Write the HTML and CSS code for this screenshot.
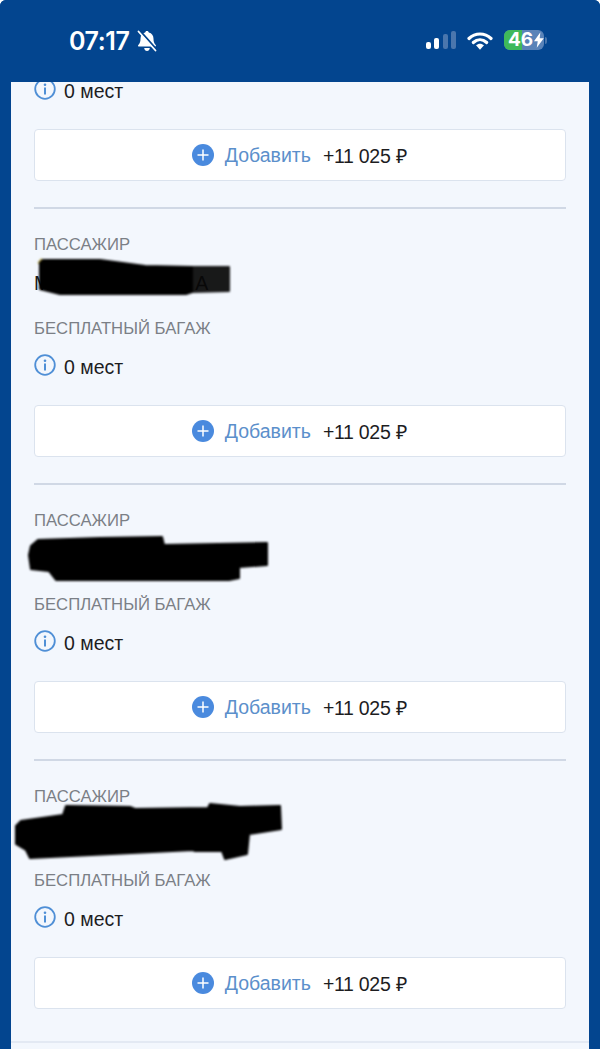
FILE: index.html
```html
<!DOCTYPE html>
<html lang="en">
<head>
    <meta charset="UTF-8">
    <meta name="viewport" content="width=device-width, initial-scale=1.0">
    <title>Багаж</title>
    <link rel="stylesheet" href="styles.css">
</head>
<body>
<div class="screen">
    <!-- Status bar -->
    <header class="statusBar">
        <div class="statusLeft">
            <span class="time">07:17</span>
            <svg class="bellIcon" viewBox="0 0 20 22" width="20" height="22">
                <path d="M10 1c1 0 1.700.7 1.800 1.600 3 .7 4.700 3.200 4.700 6.200 0 3 .6 4.500 2.200 6.100.6.7.2 1.600-.7 1.600H2c-.9 0-1.300-.9-.7-1.600C2.900 13.300 3.500 11.800 3.500 8.800c0-3 1.700-5.500 4.700-6.200C8.300 1.700 9 1 10 1z" fill="#fff"/>
                <path d="M7.200 18h5.600c-.2 1.700-1.300 3-2.800 3s-2.600-1.300-2.800-3z" fill="#fff"/>
                <path d="M3.500 1.500 19.500 19.500" stroke="#03458f" stroke-width="2.200"/>
                <path d="M1.500 1.500 18.500 20.500" stroke="#fff" stroke-width="1.800" stroke-linecap="round"/>
            </svg>
        </div>
        <div class="statusRight">
            <div class="signal">
                <span class="bar barOne"></span>
                <span class="bar barTwo"></span>
                <span class="bar barThree dim"></span>
                <span class="bar barFour dim"></span>
            </div>
            <svg class="wifiIcon" viewBox="0 0 26 19" width="26" height="19">
                <path d="M2 7.500C8.300 1.500 17.700 1.500 24 7.500" fill="none" stroke="#fff" stroke-width="3.200" stroke-linecap="round"/>
                <path d="M6.300 11.500c4-3.700 9.400-3.700 13.400 0" fill="none" stroke="#fff" stroke-width="3.200" stroke-linecap="round"/>
                <path d="M9 14.300c2.500-2.100 5.500-2.100 8 0l-4 4.500z" fill="#fff"/>
            </svg>
            <div class="battery">
                <div class="batteryBody">
                    <span class="batteryFill"></span>
                    <span class="batteryText">46</span>
                    <svg class="boltIcon" viewBox="0 0 10 16" width="10" height="16">
                        <path d="M6.500 0 0 9.200h3.800L2.800 16 10 6.300H5.800z" fill="#fff"/>
                    </svg>
                </div>
                <span class="batteryNub"></span>
            </div>
        </div>
    </header>

    <main class="panel">
        <!-- Rest of the passenger above, scrolled under the header -->
        <div class="seatsRow">
            <svg class="infoIcon" viewBox="0 0 22 22" width="22" height="22">
                <circle cx="11" cy="11" r="9.800" fill="none" stroke="#4f8fd6" stroke-width="1.800"/>
                <circle cx="11" cy="6.700" r="1.300" fill="#4f8fd6"/>
                <rect x="10" y="9.500" width="2" height="7" fill="#4f8fd6"/>
            </svg>
            <span class="seatsText">0 мест</span>
        </div>
        <button class="addBtn">
            <svg class="plusIcon" viewBox="0 0 22 22" width="22" height="22">
                <circle cx="11" cy="11" r="11" fill="#4a8ade"/>
                <path d="M11 5.500v11M5.500 11h11" stroke="#fff" stroke-width="1.500"/>
            </svg>
            <span class="addLabel">Добавить</span>
            <span class="addPrice">+11 025 ₽</span>
        </button>

        <section class="passenger">
            <div class="fieldLabel">ПАССАЖИР</div>
            <div class="passengerName">М<span class="nameEnd">А</span></div>
            <div class="fieldLabel">БЕСПЛАТНЫЙ БАГАЖ</div>
            <div class="seatsRow">
                <svg class="infoIcon" viewBox="0 0 22 22" width="22" height="22">
                    <circle cx="11" cy="11" r="9.800" fill="none" stroke="#4f8fd6" stroke-width="1.800"/>
                    <circle cx="11" cy="6.700" r="1.300" fill="#4f8fd6"/>
                    <rect x="10" y="9.500" width="2" height="7" fill="#4f8fd6"/>
                </svg>
                <span class="seatsText">0 мест</span>
            </div>
            <button class="addBtn">
                <svg class="plusIcon" viewBox="0 0 22 22" width="22" height="22">
                    <circle cx="11" cy="11" r="11" fill="#4a8ade"/>
                    <path d="M11 5.500v11M5.500 11h11" stroke="#fff" stroke-width="1.500"/>
                </svg>
                <span class="addLabel">Добавить</span>
                <span class="addPrice">+11 025 ₽</span>
            </button>
            <svg class="scribble" viewBox="0 0 300 70" width="300" height="70">
                <path class="scribbleTip" d="M38 15 41 11 44 12 42 18z"/>
                <path class="scribbleThin" d="M190 19H229V43L190 44z"/>
                <path d="M40 15 43 12H100L145 18 192 19V44L186 46H60L40 41z"/>
            </svg>
        </section>

        <section class="passenger">
            <div class="fieldLabel">ПАССАЖИР</div>
            <div class="passengerName">&nbsp;</div>
            <div class="fieldLabel">БЕСПЛАТНЫЙ БАГАЖ</div>
            <div class="seatsRow">
                <svg class="infoIcon" viewBox="0 0 22 22" width="22" height="22">
                    <circle cx="11" cy="11" r="9.800" fill="none" stroke="#4f8fd6" stroke-width="1.800"/>
                    <circle cx="11" cy="6.700" r="1.300" fill="#4f8fd6"/>
                    <rect x="10" y="9.500" width="2" height="7" fill="#4f8fd6"/>
                </svg>
                <span class="seatsText">0 мест</span>
            </div>
            <button class="addBtn">
                <svg class="plusIcon" viewBox="0 0 22 22" width="22" height="22">
                    <circle cx="11" cy="11" r="11" fill="#4a8ade"/>
                    <path d="M11 5.500v11M5.500 11h11" stroke="#fff" stroke-width="1.500"/>
                </svg>
                <span class="addLabel">Добавить</span>
                <span class="addPrice">+11 025 ₽</span>
            </button>
            <svg class="scribble" viewBox="0 0 300 70" width="300" height="70">
                <path d="M31 22 38 16 100 14 162 13 164 21 267 19V41L239 43V54L229 56H56L49 47 31 45 29 31z"/>
            </svg>
        </section>

        <section class="passenger">
            <div class="fieldLabel">ПАССАЖИР</div>
            <div class="passengerName">&nbsp;</div>
            <div class="fieldLabel">БЕСПЛАТНЫЙ БАГАЖ</div>
            <div class="seatsRow">
                <svg class="infoIcon" viewBox="0 0 22 22" width="22" height="22">
                    <circle cx="11" cy="11" r="9.800" fill="none" stroke="#4f8fd6" stroke-width="1.800"/>
                    <circle cx="11" cy="6.700" r="1.300" fill="#4f8fd6"/>
                    <rect x="10" y="9.500" width="2" height="7" fill="#4f8fd6"/>
                </svg>
                <span class="seatsText">0 мест</span>
            </div>
            <button class="addBtn">
                <svg class="plusIcon" viewBox="0 0 22 22" width="22" height="22">
                    <circle cx="11" cy="11" r="11" fill="#4a8ade"/>
                    <path d="M11 5.500v11M5.500 11h11" stroke="#fff" stroke-width="1.500"/>
                </svg>
                <span class="addLabel">Добавить</span>
                <span class="addPrice">+11 025 ₽</span>
            </button>
            <svg class="scribble" viewBox="0 0 300 70" width="300" height="70">
                <path d="M16 26 21 21 63 15 66 6 130 7 135 9 208 8 210 4 240 7 280 6 281 29 249 34 247 54 225 59 222 51 195 51 193 50 30 58 26 50 16 44z"/>
            </svg>
        </section>

        <div class="panelEnd"></div>
    </main>
</div>
</body>
</html>
```

FILE: styles.css
```css
html {
    background-color: #ffffff;
}

body {
    margin: 0;
    padding: 0;
    font-family: "Liberation Sans", Arial, sans-serif;
}

.screen {
    height: 1049px;
    overflow: hidden;
    background-color: #03458f;
    border-radius: 6px 6px 0 0;
}

/* Status bar */
.statusBar {
    position: relative;
    z-index: 1;
    height: 82px;
    box-sizing: border-box;
    padding: 29px 53px 0 69px;
    display: flex;
    justify-content: space-between;
    align-items: flex-start;
    background-color: #03458f;
    color: #ffffff;
}

.statusLeft {
    display: flex;
    align-items: center;
    gap: 7px;
}

.time {
    font-family: Inter, sans-serif;
    font-size: 25px;
    font-weight: 600;
    line-height: 24px;
    letter-spacing: -0.4px;
}

.statusRight {
    display: flex;
    align-items: flex-start;
    padding-top: 1px;
}

.signal {
    display: flex;
    align-items: flex-end;
    gap: 3.33px;
    height: 19px;
    margin-right: 11px;
}

.bar {
    width: 5px;
    border-radius: 2px;
    background-color: #ffffff;
}

.bar.dim {
    background-color: #4a76ad;
}

.barOne { height: 7px; }
.barTwo { height: 11px; }
.barThree { height: 15px; }
.barFour { height: 18px; }

.wifiIcon {
    margin-top: 1px;
    margin-right: 11px;
}

.battery {
    display: flex;
    align-items: center;
    gap: 1px;
}

.batteryBody {
    position: relative;
    display: flex;
    align-items: center;
    width: 40px;
    height: 20px;
    padding-left: 4px;
    box-sizing: border-box;
    border-radius: 6px;
    background-color: #5a83b8;
}

.batteryFill {
    position: absolute;
    left: 0;
    top: 0;
    bottom: 0;
    width: 18px;
    border-radius: 6px 0 0 6px;
    background-color: #3fb95a;
}

.batteryText {
    position: relative;
    font-family: Inter, sans-serif;
    font-size: 19px;
    font-weight: 700;
    line-height: 20px;
}

.boltIcon {
    position: relative;
    margin-left: 1px;
}

.batteryNub {
    width: 2px;
    height: 7px;
    border-radius: 0 2px 2px 0;
    background-color: #4a76ad;
}

/* Main panel */
.panel {
    margin: -2px 11px 0;
    padding: 0 23px;
    background-color: #f3f7fd;
    color: #1d1d1f;
}

.seatsRow {
    display: flex;
    align-items: center;
    gap: 8px;
    height: 24px;
    font-size: 19.5px;
}

.seatsText {
    margin-bottom: 2px;
}

.infoIcon {
    flex-shrink: 0;
    margin-bottom: 6px;
}

.addBtn {
    display: flex;
    justify-content: center;
    align-items: center;
    width: 100%;
    height: 52px;
    margin-top: 25px;
    padding: 0;
    background-color: #ffffff;
    border: 1px solid #dbe3ee;
    border-radius: 4px;
    font-family: inherit;
    font-size: 19.5px;
    cursor: pointer;
}

.plusIcon {
    margin-right: 11px;
}

.addLabel {
    color: #5b8fcb;
    margin-right: 12px;
}

.addPrice {
    color: #1d1d1f;
    letter-spacing: -0.3px;
    margin-right: 2px;
}

.passenger {
    position: relative;
    margin-top: 26px;
    padding-top: 26px;
    border-top: 2px solid #d0d8e5;
}

.fieldLabel {
    height: 20px;
    font-size: 16.7px;
    line-height: 20px;
    color: #7b7f86;
}

.passengerName {
    display: flex;
    height: 64px;
    box-sizing: border-box;
    padding-top: 16px;
    font-size: 19.5px;
    line-height: 24px;
}

.nameEnd {
    margin-left: 145px;
    color: #555555;
}

.passenger .seatsRow {
    margin-top: 17px;
}

/* Marker scribbled over the names */
.scribble {
    position: absolute;
    left: -34px;
    top: 39px;
    filter: blur(1px);
}

.scribble path {
    fill: #000000;
    stroke: #000000;
    stroke-width: 2px;
    stroke-linejoin: round;
}

.scribble .scribbleThin {
    opacity: 0.9;
}

.scribble .scribbleTip {
    fill: #b9a53c;
    stroke: #b9a53c;
    stroke-width: 1px;
}

.panelEnd {
    margin-top: 32px;
    margin-left: -23px;
    margin-right: -23px;
    height: 30px;
    border-top: 2px solid #e3e9f3;
}
```
